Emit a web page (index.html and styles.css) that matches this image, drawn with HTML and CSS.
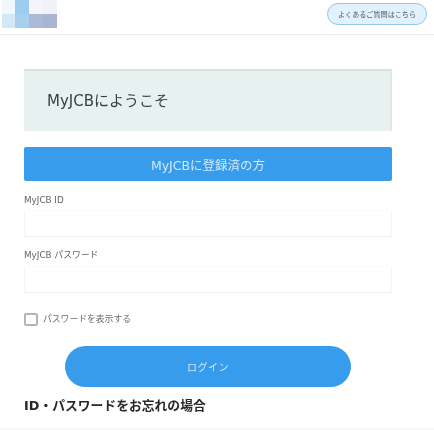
FILE: index.html
```html
<!DOCTYPE html>
<html lang="ja">
<head>
<meta charset="utf-8">
<title>MyJCB</title>
<link rel="stylesheet" href="styles.css">
</head>
<body>
<div class="page">
<header class="header">
  <div class="logo" aria-label="logo">
    <span class="c1"></span><span class="c2"></span><span class="c3"></span><span class="c4"></span>
    <span class="c5"></span><span class="c6"></span><span class="c7"></span><span class="c8"></span>
  </div>
  <a class="faq">よくあるご質問はこちら</a>
</header>
<main class="main">
  <h1 class="welcome">MyJCBにようこそ</h1>
  <h2 class="bar">MyJCBに登録済の方</h2>
  <label class="label first">MyJCB ID</label>
  <div class="input"></div>
  <label class="label second">MyJCB パスワード</label>
  <div class="input second-input"></div>
  <div class="check"><span class="box"></span><span class="check-text">パスワードを表示する</span></div>
  <div class="login-row"><button class="login">ログイン</button></div>
  <h3 class="forgot">ID・パスワードをお忘れの場合</h3>
</main>
<div class="bottom"></div>
</div>
</body>
</html>
```
FILE: styles.css
```css
* { box-sizing: border-box; }
html, body { margin: 0; padding: 0; }
body {
  width: 434px;
  height: 430px;
  overflow: hidden;
  background: #fff;
  font-family: "DejaVu Sans", "Noto Sans CJK JP", sans-serif;
}
.page {
  position: relative;
  width: 434px;
  height: 430px;
  overflow: hidden;
  filter: blur(0.45px);
}
.header {
  height: 35px;
  border-bottom: 1px solid #ececee;
  display: flex;
  justify-content: space-between;
  align-items: flex-start;
  padding: 3px 7px 0 2px;
}
.logo {
  margin-top: -3px;
  display: grid;
  grid-template-columns: 13px 14px 14px 14px;
  grid-template-rows: 14px 14px;
}
.c1 { background: #f0f8fd; }
.c2 { background: #9ccdf0; }
.c3 { background: #f3f5fa; }
.c4 { background: #f0f2f7; }
.c5 { background: #d3e8f7; }
.c6 { background: #a6d0ee; }
.c7 { background: #aeb9d5; }
.c8 { background: #a9b5d3; }
.faq {
  width: 100px;
  height: 22px;
  border: 1px solid #8cc8f0;
  border-radius: 11px;
  background: #e3f1fd;
  color: #4d5a75;
  font-size: 7.1px;
  font-family: "Noto Sans CJK JP", sans-serif;
  display: flex;
  align-items: center;
  justify-content: center;
}
.main { padding: 34px 42px 0 24px; }
.welcome {
  margin: 0;
  height: 62px;
  background: #e7f1f0;
  border-top: 2px solid #dcdfdf;
  border-right: 2px solid #e2e6e6;
  color: #3c4043;
  font-size: 15px;
  font-weight: 400;
  display: flex;
  align-items: center;
  padding: 0 0 3px 23px;
}
.bar {
  margin: 16px 0 0;
  height: 34px;
  background: #379ceb;
  border-radius: 2px;
  color: #d5e9fa;
  font-size: 12.5px;
  font-weight: 400;
  display: flex;
  align-items: center;
  justify-content: center;
}
.label {
  display: block;
  font-size: 8.8px;
  line-height: 10px;
  color: #606368;
  white-space: nowrap;
}
.label.first { margin-top: 14px; }
.label.second { margin-top: 13px; }
.input {
  height: 27px;
  margin-top: 5px;
  background: #fff;
  border: 1px solid #f4f4f6;
  border-top-color: #fbfbfb;
  border-bottom-color: #eeeef0;
  border-radius: 3px;
}
.second-input { margin-top: 6px; }
.check {
  display: flex;
  align-items: center;
  gap: 5px;
  margin-top: 20px;
}
.box {
  width: 14px;
  height: 13px;
  border: 2px solid #b5b5b8;
  border-radius: 2px;
  background: #fff;
}
.check-text {
  font-size: 8.8px;
  color: #6a6d72;
  line-height: 13px;
}
.login-row {
  padding: 0 41px;
  margin-top: 20px;
}
.login {
  display: block;
  width: 286px;
  height: 41px;
  border: 0;
  border-radius: 21px;
  background: #379ceb;
  color: #cfe6f9;
  font-family: "Noto Sans CJK JP", sans-serif;
  font-size: 10px;
  letter-spacing: 0.5px;
}
.forgot {
  margin: 10px 0 0;
  font-size: 12.8px;
  line-height: 18px;
  font-weight: 700;
  color: #26292c;
  white-space: nowrap;
}
.bottom {
  position: absolute;
  left: 0;
  right: 0;
  bottom: 0;
  height: 2px;
  background: #f6f8fa;
}
```
